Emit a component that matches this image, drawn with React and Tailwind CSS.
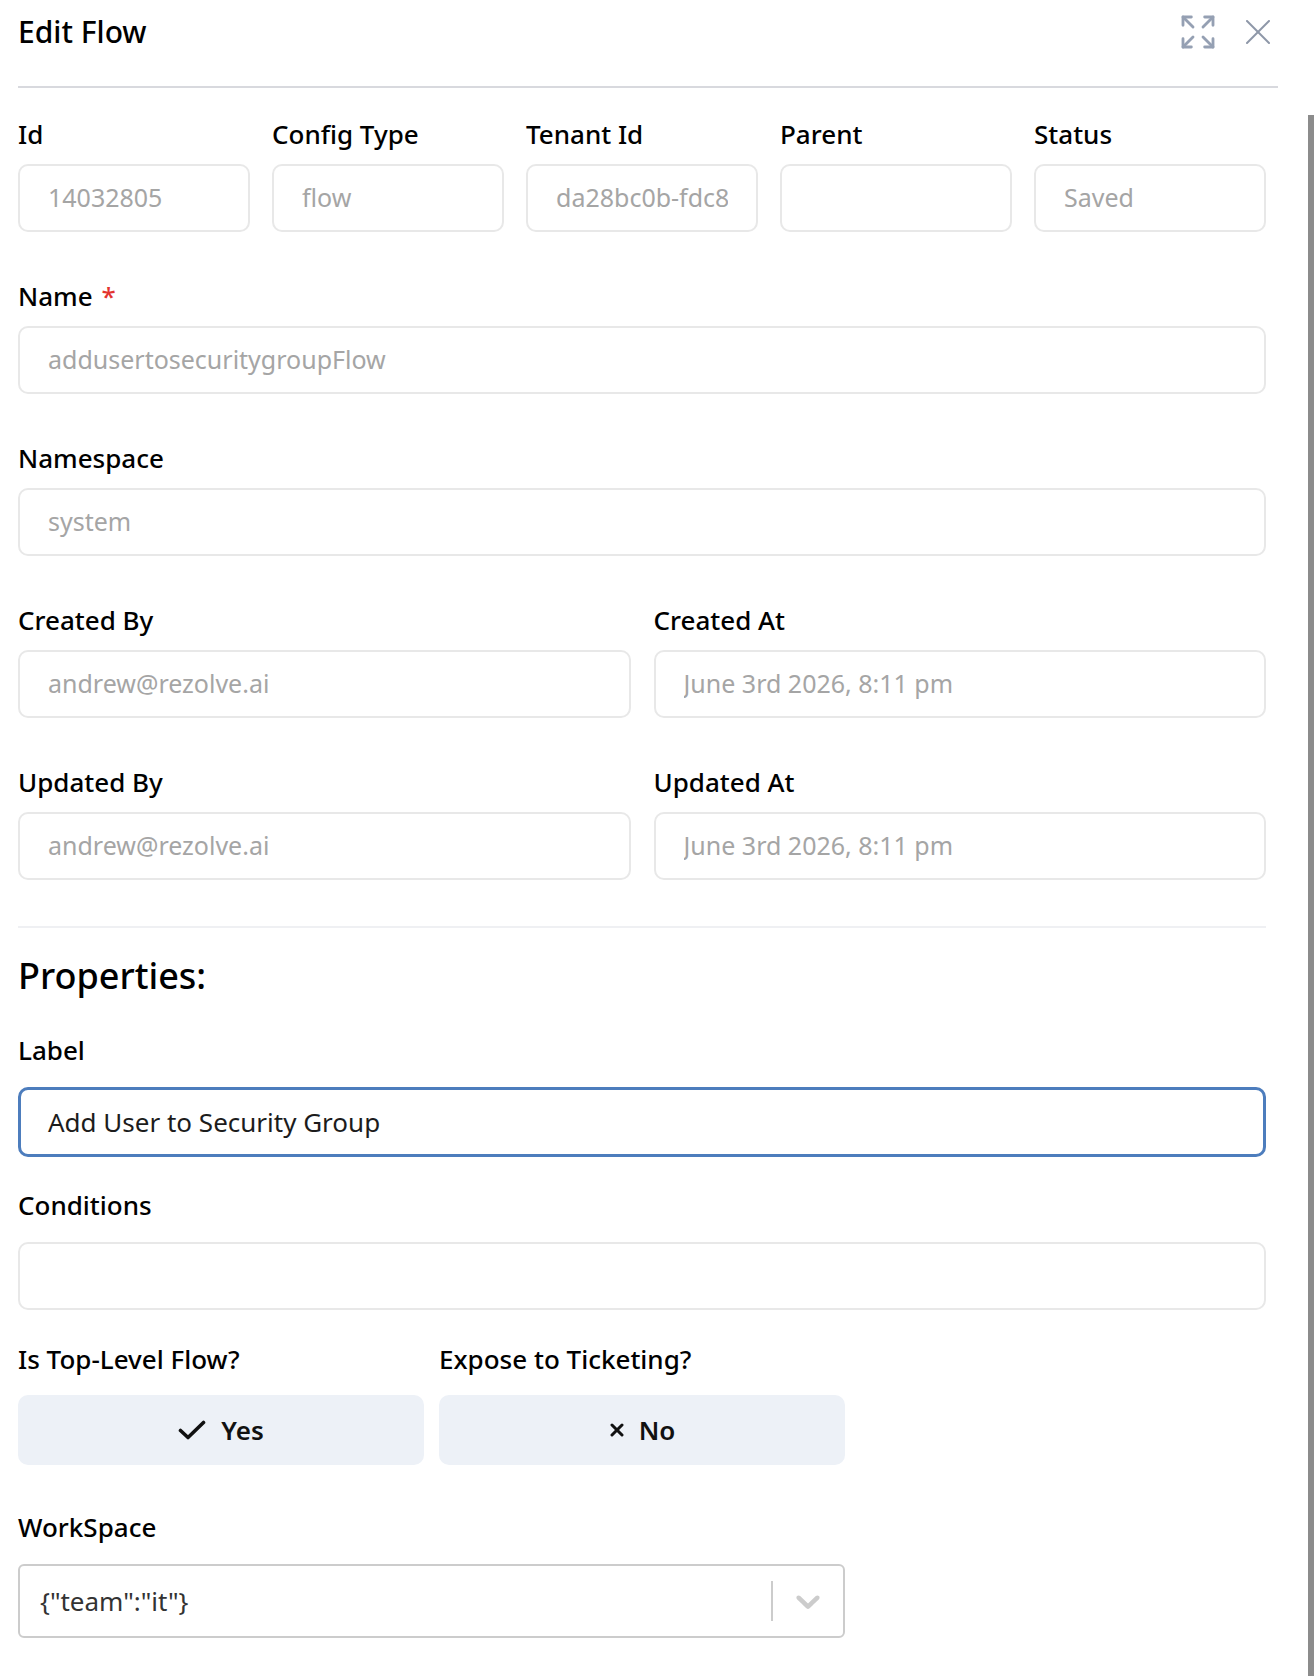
import React from "react";

const FONT = { fontFamily: '"Noto Sans", "Liberation Sans", sans-serif' };

function ExpandIcon() {
  return (
    <svg width="40" height="40" viewBox="0 0 24 24" fill="none" stroke="#95a0b3" strokeWidth="1.7" strokeLinecap="round" strokeLinejoin="round">
      <path d="m15 15 6 6" />
      <path d="m15 9 6-6" />
      <path d="M21 16v5h-5" />
      <path d="M21 8V3h-5" />
      <path d="M3 16v5h5" />
      <path d="m3 21 6-6" />
      <path d="M3 8V3h5" />
      <path d="M9 9 3 3" />
    </svg>
  );
}

function CloseIcon() {
  return (
    <svg width="24" height="24" viewBox="0 0 24 24" fill="none" stroke="#8e97a8" strokeWidth="2" strokeLinecap="round">
      <path d="M1 1 23 23" />
      <path d="M23 1 1 23" />
    </svg>
  );
}

function Label({ children, required }) {
  return (
    <div className="text-[26px] leading-[30px] font-medium text-black whitespace-nowrap">
      {children}
      {required && <span className="ml-[9px] text-[#e3342f]">*</span>}
    </div>
  );
}

function ReadOnlyInput({ value }) {
  return (
    <div className="h-[68px] rounded-[10px] border-2 border-[#e8e8e8] px-[28px] flex items-center">
      <div className="w-full overflow-hidden whitespace-nowrap text-[25px] text-[#a5a5a5]">{value}</div>
    </div>
  );
}

function Field({ label, value, required }) {
  return (
    <div className="flex flex-col gap-[15px] min-w-0">
      <Label required={required}>{label}</Label>
      <ReadOnlyInput value={value} />
    </div>
  );
}

function CheckMark() {
  return (
    <svg width="28" height="20" viewBox="0 0 28 20" fill="none" stroke="#111" strokeWidth="3.6" strokeLinecap="round" strokeLinejoin="round">
      <path d="M2.5 10.5 10 17.5 25.5 2.5" />
    </svg>
  );
}

function CrossMark() {
  return (
    <svg width="16" height="14" viewBox="0 0 16 14" fill="none" stroke="#111" strokeWidth="3" strokeLinecap="round">
      <path d="M3 2 13 12" />
      <path d="M13 2 3 12" />
    </svg>
  );
}

function Chevron() {
  return (
    <svg width="40" height="40" viewBox="0 0 20 20" fill="#cccccc">
      <path d="M4.516 7.548c0.436-0.446 1.043-0.481 1.576 0l3.908 3.747 3.908-3.747c0.533-0.481 1.141-0.446 1.574 0 0.436 0.445 0.408 1.197 0 1.615-0.406 0.418-4.695 4.502-4.695 4.502-0.217 0.223-0.502 0.335-0.787 0.335s-0.57-0.112-0.789-0.335c0 0-4.287-4.084-4.695-4.502s-0.436-1.17 0-1.615z" />
    </svg>
  );
}

export default function App() {
  return (
    <div className="w-[1314px] h-[1676px] overflow-hidden bg-white text-black" style={FONT}>
      {/* Header */}
      <div className="pl-[18px] pr-[36px]">
        <div className="h-[64px] flex items-center justify-between">
          <div className="text-[30px] leading-[36px] font-medium text-black">Edit Flow</div>
          <div className="flex items-center gap-[28px] mr-[8px]">
            <ExpandIcon />
            <CloseIcon />
          </div>
        </div>
        <div className="mt-[22px] h-[2px] bg-[#d8d9de]" />
      </div>

      {/* Body */}
      <div className="flex">
        <div className="w-[1308px] pl-[18px] pr-[42px] pt-[31px]">
          <div className="flex flex-col gap-[49px]">
            <div className="grid grid-cols-5 gap-[22px]">
              <Field label="Id" value="14032805" />
              <Field label="Config Type" value="flow" />
              <Field label="Tenant Id" value="da28bc0b-fdc8-4a2e" />
              <Field label="Parent" value="" />
              <Field label="Status" value="Saved" />
            </div>
            <Field label="Name" value="addusertosecuritygroupFlow" required />
            <Field label="Namespace" value="system" />
            <div className="grid grid-cols-2 gap-[23px]">
              <Field label="Created By" value="andrew@rezolve.ai" />
              <Field label="Created At" value="June 3rd 2026, 8:11 pm" />
            </div>
            <div className="grid grid-cols-2 gap-[23px]">
              <Field label="Updated By" value="andrew@rezolve.ai" />
              <Field label="Updated At" value="June 3rd 2026, 8:11 pm" />
            </div>
          </div>

          <div className="mt-[46px] h-[2px] bg-[#eff0f3]" />

          <div className="mt-[26px] text-[36px] leading-[44px] font-medium text-black">Properties:</div>

          {/* Label */}
          <div className="mt-[37px] flex flex-col gap-[22px]">
            <Label>Label</Label>
            <div className="h-[70px] rounded-[10px] border-[3px] border-[#4d7dbd] px-[27px] flex items-center">
              <span className="text-[26px] text-[#1c1c1c] whitespace-nowrap">Add User to Security Group</span>
            </div>
          </div>

          {/* Conditions */}
          <div className="mt-[33px] flex flex-col gap-[22px]">
            <Label>Conditions</Label>
            <div className="h-[68px] rounded-[10px] border-2 border-[#e8e8e8]" />
          </div>

          {/* Toggles */}
          <div className="mt-[34px] grid grid-cols-3 gap-x-[15px] gap-y-[21px]">
            <Label>Is Top-Level Flow?</Label>
            <Label>Expose to Ticketing?</Label>
            <div />
            <div className="h-[70px] rounded-[10px] bg-[#edf1f7] flex items-center justify-center gap-[15px]">
              <CheckMark />
              <span className="text-[26px] font-semibold text-[#111]">Yes</span>
            </div>
            <div className="h-[70px] rounded-[10px] bg-[#edf1f7] flex items-center justify-center gap-[14px]">
              <CrossMark />
              <span className="text-[26px] font-semibold text-[#111]">No</span>
            </div>
            <div />
          </div>

          {/* WorkSpace */}
          <div className="mt-[47px] grid grid-cols-3 gap-x-[15px] gap-y-[22px]">
            <div className="col-span-3">
              <Label>WorkSpace</Label>
            </div>
            <div className="col-span-2 h-[74px] rounded-[6px] border-2 border-[#cccccc] flex items-center pl-[20px]">
              <span className="flex-1 text-[26px] text-[#333333] whitespace-nowrap">{'{"team":"it"}'}</span>
              <div className="w-[2px] h-[40px] bg-[#cccccc]" />
              <div className="w-[70px] flex items-center justify-center">
                <Chevron />
              </div>
            </div>
          </div>
        </div>

        {/* Scrollbar */}
        <div className="w-[6px] mt-[27px] h-[1600px] bg-[#8c8c8c]" />
      </div>
    </div>
  );
}
